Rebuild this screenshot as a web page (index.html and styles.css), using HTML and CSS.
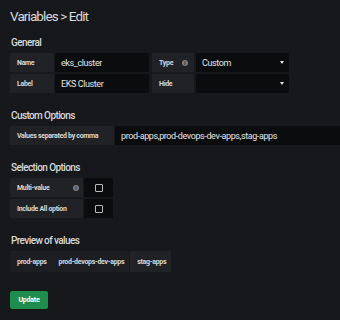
FILE: index.html
```html
<!DOCTYPE html>
<html lang="en">

<head>
    <meta charset="UTF-8" />
    <title>Variables &gt; Edit</title>
    <link rel="stylesheet" href="styles.css">
</head>

<body>
    <div class="page">
        <h1 class="page-title">Variables &gt; Edit</h1>

        <h5 class="section-title">General</h5>
        <div class="form-row">
            <span class="form-label w-name">Name</span>
            <span class="form-input w-input">eks_cluster</span>
            <span class="form-label w-type">Type <i class="info">i</i></span>
            <span class="form-select w-select">Custom <b class="caret"></b></span>
        </div>
        <div class="form-row">
            <span class="form-label w-name">Label</span>
            <span class="form-input w-input">EKS Cluster</span>
            <span class="form-label w-type">Hide</span>
            <span class="form-select w-select"><b class="caret"></b></span>
        </div>

        <h5 class="section-title">Custom Options</h5>
        <div class="form-row">
            <span class="form-label w-values">Values separated by comma</span>
            <span class="form-input grow">prod-apps,prod-devops-dev-apps,stag-apps</span>
        </div>

        <h5 class="section-title">Selection Options</h5>
        <div class="form-row">
            <span class="form-label w-switch">Multi-value <i class="info">i</i></span>
            <span class="form-check"><span class="box"></span></span>
        </div>
        <div class="form-row">
            <span class="form-label w-switch">Include All option</span>
            <span class="form-check"><span class="box"></span></span>
        </div>

        <h5 class="section-title">Preview of values</h5>
        <div class="preview">
            <span class="chip">prod-apps</span>
            <span class="chip">prod-devops-dev-apps</span>
            <span class="chip sep">stag-apps</span>
        </div>

        <button class="btn-update">Update</button>
    </div>
</body>

</html>
```

FILE: styles.css
```css
* {
    box-sizing: border-box;
}

body {
    margin: 0;
    background-color: #17181b;
    color: #d8d9da;
    font-family: Roboto, 'Liberation Sans', sans-serif;
}

.page {
    padding: 7px 10px 10px 10px;
}

.page-title {
    font-size: 13.5px;
    font-weight: 400;
    margin: 0 0 12px 0;
    line-height: 18px;
    letter-spacing: -0.9px;
}

.section-title {
    font-size: 10px;
    font-weight: 500;
    margin: 0 0 4px 1px;
    line-height: 12px;
    letter-spacing: -0.6px;
}

.form-row {
    display: flex;
    height: 19px;
    margin-bottom: 2px;
}

.form-label {
    display: flex;
    align-items: center;
    justify-content: space-between;
    background-color: #212225;
    font-size: 7px;
    font-weight: 700;
    padding: 0 6px 0 7px;
    margin-right: 1px;
    letter-spacing: -0.3px;
}

.form-input,
.form-select {
    display: flex;
    align-items: center;
    background-color: #0b0c0e;
    color: #e4e5e6;
    font-size: 9px;
    padding: 0 6px;
    letter-spacing: -0.4px;
}

.w-name { width: 44px; }
.w-input { width: 94px; margin-right: 3px; }
.w-type { width: 42px; margin-right: 2px; }
.w-select { width: 93px; }
.w-values { width: 104px; }
.w-switch { width: 73px; padding-right: 4px; }

.grow {
    flex: 1;
    margin-right: -10px;
}

.info {
    display: inline-flex;
    align-items: center;
    justify-content: center;
    width: 6px;
    height: 6px;
    border-radius: 50%;
    background-color: #7b7d81;
    color: #212225;
    font-size: 5px;
    font-style: normal;
    font-weight: 700;
    letter-spacing: 0;
}

.caret {
    width: 0;
    height: 0;
    margin-left: auto;
    margin-right: -1px;
    border-left: 2.5px solid transparent;
    border-right: 2.5px solid transparent;
    border-top: 3px solid #e4e5e6;
}

.form-check {
    display: flex;
    align-items: center;
    justify-content: center;
    width: 29px;
    background-color: #0b0c0e;
}

.form-check .box {
    width: 8px;
    height: 8px;
    border: 1px solid #b9babc;
    border-radius: 1px;
}

.form-row + .section-title {
    margin-top: 17px;
}

.preview {
    display: flex;
    height: 21px;
}

.chip {
    display: flex;
    align-items: center;
    background-color: #1d1e21;
    font-size: 7px;
    font-weight: 700;
    padding: 0 5px 0 7px;
    letter-spacing: -0.3px;
}

.chip.sep {
    margin-left: 1px;
    background-color: #212225;
}

.btn-update {
    display: block;
    margin-top: 19px;
    width: 38px;
    height: 18px;
    padding: 0;
    border: none;
    border-radius: 2px;
    background-color: #1f8d4d;
    color: #ffffff;
    font-family: Roboto, 'Liberation Sans', sans-serif;
    font-size: 7px;
    font-weight: 700;
    letter-spacing: -0.2px;
}
```
